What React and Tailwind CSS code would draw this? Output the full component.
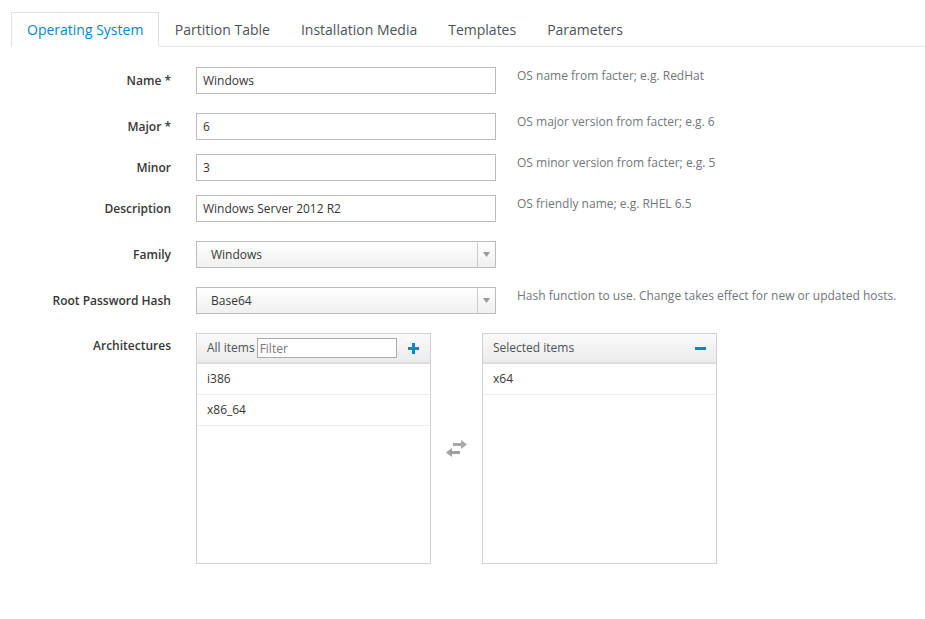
import React from 'react';

const font = { fontFamily: '"Open Sans", "Noto Sans", sans-serif' };

const tabs = ['Operating System', 'Partition Table', 'Installation Media', 'Templates', 'Parameters'];

const TextRow = ({ label, value, help, mt }) => (
  <div className={`flex items-start whitespace-nowrap ${mt}`}>
    <label className="w-[160px] shrink-0 pt-[1px] text-right text-[12px] font-semibold leading-[26px] text-[#363636]">{label}</label>
    <input
      readOnly
      value={value}
      className="ml-[25px] h-[27px] w-[300px] shrink-0 border border-[#bbbbbb] bg-white px-[6px] text-[12px] text-[#363636] outline-none"
    />
    {help && <span className="ml-[21px] text-[12px] leading-[18px] text-[#72767b]">{help}</span>}
  </div>
);

const SelectRow = ({ label, value, help, mt }) => (
  <div className={`flex items-start whitespace-nowrap ${mt}`}>
    <label className="w-[160px] shrink-0 pt-[1px] text-right text-[12px] font-semibold leading-[26px] text-[#363636]">{label}</label>
    <div className="ml-[25px] flex h-[27px] w-[300px] shrink-0 items-stretch border border-[#bbbbbb] bg-gradient-to-b from-white to-[#f0f0f0]">
      <span className="flex-1 pl-[14px] text-[12px] leading-[25px] text-[#363636]">{value}</span>
      <span className="flex w-[18px] items-center justify-center border-l border-[#cccccc]">
        <svg width="7" height="5" viewBox="0 0 7 5"><path d="M0 0h7L3.5 5z" fill="#999" /></svg>
      </span>
    </div>
    {help && <span className="ml-[21px] text-[12px] leading-[18px] text-[#72767b]">{help}</span>}
  </div>
);

const ListRow = ({ children }) => (
  <div className="h-[31px] border-b border-[#ededed] pl-[10px] text-[12px] leading-[30px] text-[#363636]">{children}</div>
);

export default function App() {
  return (
    <div style={font} className="min-h-[619px] bg-white pl-[11px] pt-[12px]">
      <div className="flex border-b border-[#e5e5e5]">
        {tabs.map((t, i) => (
          <div
            key={t}
            className={
              i === 0
                ? '-mb-px h-[35px] border border-b-white border-[#e0e0e0] px-[15px] text-[14px] leading-[33px] text-[#0088ce]'
                : 'h-[34px] px-[15.5px] pt-[2px] text-[14px] leading-[32px] text-[#4d5258]'
            }
          >
            {t}
          </div>
        ))}
      </div>

      <div className="pr-4">
        <TextRow label="Name *" value="Windows" help="OS name from facter; e.g. RedHat" mt="mt-[20px]" />
        <TextRow label="Major *" value="6" help="OS major version from facter; e.g. 6" mt="mt-[19px]" />
        <TextRow label="Minor" value="3" help="OS minor version from facter; e.g. 5" mt="mt-[14px]" />
        <TextRow label="Description" value="Windows Server 2012 R2" help="OS friendly name; e.g. RHEL 6.5" mt="mt-[14px]" />
        <SelectRow label="Family" value="Windows" mt="mt-[19px]" />
        <SelectRow label="Root Password Hash" value="Base64" help="Hash function to use. Change takes effect for new or updated hosts." mt="mt-[19px]" />

        <div className="mt-[19px] flex items-start">
          <label className="w-[160px] shrink-0 pt-[4px] text-right text-[12px] font-semibold leading-[18px] text-[#363636]">Architectures</label>
          <div className="ml-[25px] flex items-center">
            <div className="h-[231px] w-[235px] border border-[#d1d1d1] bg-white">
              <div className="flex h-[30px] items-center border-b-2 border-[#dddddd] bg-gradient-to-b from-[#fafafa] to-[#ececec] pl-[10px] pr-[11px]">
                <span className="text-[12px] text-[#4d5258]">All items</span>
                <input
                  readOnly
                  placeholder="Filter"
                  className="ml-[2px] h-[20px] w-[140px] border border-[#aaaaaa] bg-white px-[2px] text-[12px] text-[#363636] outline-none placeholder:text-[#777]"
                />
                <span className="ml-auto">
                  <svg width="11" height="11" viewBox="0 0 11 11"><path d="M4 0h3v4h4v3H7v4H4V7H0V4h4z" fill="#0088ce" /></svg>
                </span>
              </div>
              <ListRow>i386</ListRow>
              <ListRow>x86_64</ListRow>
            </div>

            <div className="flex w-[51px] justify-center">
              <svg width="23" height="17" viewBox="0 0 23 17">
                <path d="M8 3h8V0l6 4.5L16 9V6H8z" fill="#a8a8a8" />
                <path d="M15 11H7V8l-6 4.5L7 17v-3h8z" fill="#a0a0a0" />
              </svg>
            </div>

            <div className="h-[231px] w-[235px] border border-[#d1d1d1] bg-white">
              <div className="flex h-[30px] items-center border-b-2 border-[#dddddd] bg-gradient-to-b from-[#fafafa] to-[#ececec] pl-[10px] pr-[10px]">
                <span className="text-[12px] text-[#4d5258]">Selected items</span>
                <span className="ml-auto">
                  <svg width="11" height="3" viewBox="0 0 11 3"><rect width="11" height="3" fill="#0088ce" /></svg>
                </span>
              </div>
              <ListRow>x64</ListRow>
            </div>
          </div>
        </div>
      </div>
    </div>
  );
}
